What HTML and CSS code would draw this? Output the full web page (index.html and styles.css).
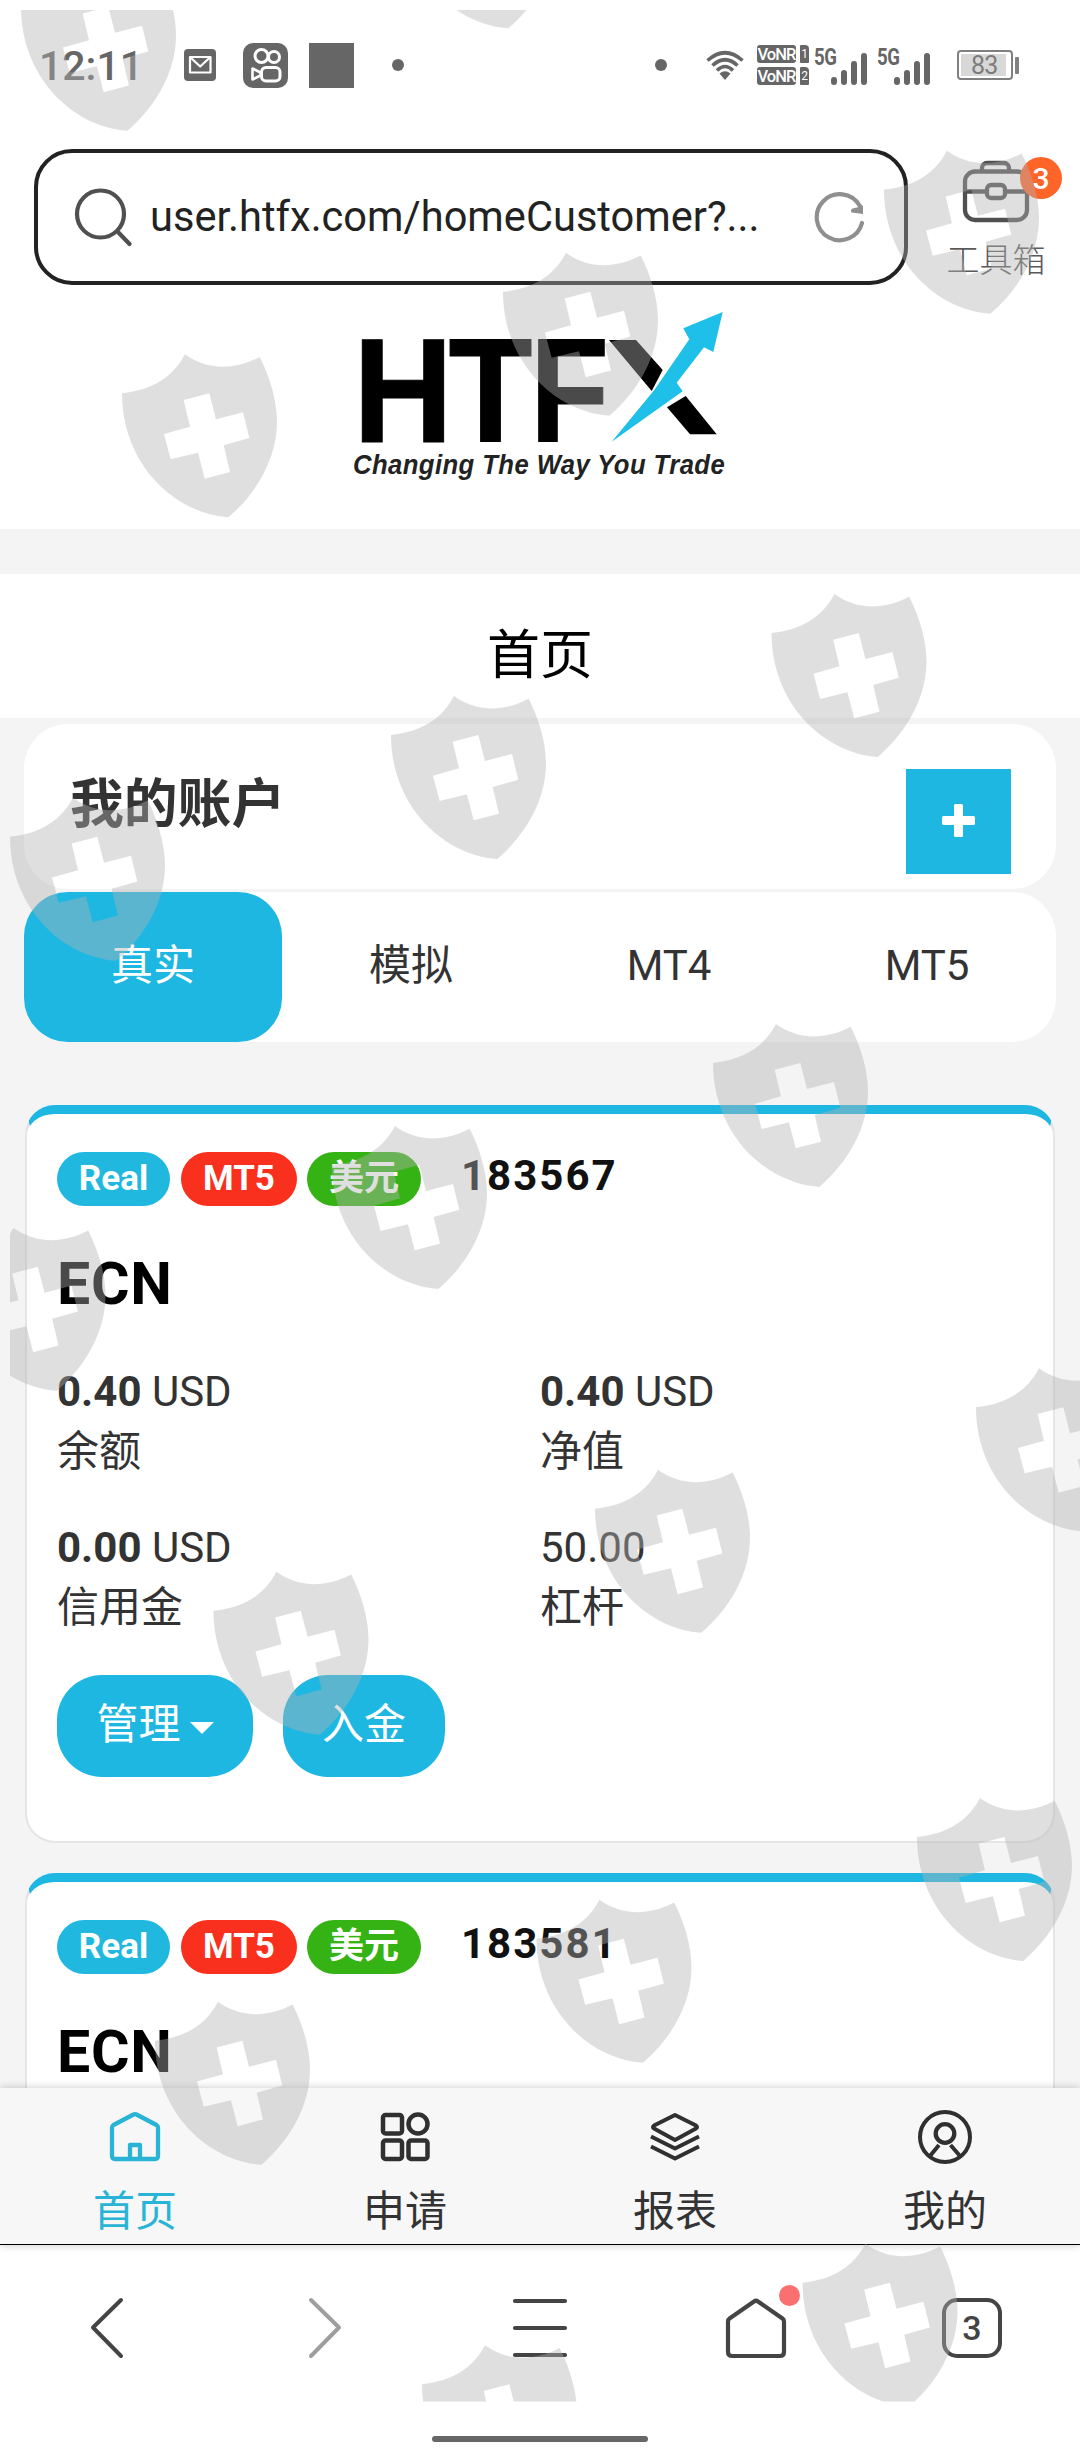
FILE: index.html
```html
<!DOCTYPE html>
<html lang="zh-CN">
<head>
<meta charset="utf-8">
<title>首页</title>
<link rel="stylesheet" href="styles.css">
</head>
<body>
<div class="phone">
  <header class="status">
    <span class="clock">12:11</span>
    <svg class="st-mail" width="32" height="32" viewBox="0 0 32 32"><rect width="32" height="32" rx="4" fill="#666"/><g fill="none" stroke="#fff" stroke-width="2.2" stroke-linejoin="round"><rect x="6" y="8" width="20.500" height="15.500"/><path d="M6.500 8.500l9.700 9 9.700-9"/></g></svg>
    <svg class="st-video" width="45" height="45" viewBox="0 0 45 45"><rect width="45" height="45" rx="10" fill="#666"/><g fill="none" stroke="#fff" stroke-width="3"><circle cx="18.500" cy="13" r="6.500"/><circle cx="31" cy="14" r="5.500"/><rect x="18.500" y="24.500" width="18.500" height="13.500" rx="4.500"/><path d="M17.500 29.500l-8-4v11l8-4z" stroke-linejoin="round" stroke-width="2.600"/></g></svg>
    <span class="st-square"></span>
    <span class="st-dot"></span>
    <span class="st-dot st-dot-right"></span>
    <svg class="st-wifi" width="38" height="31" viewBox="0 0 38 31"><g fill="none" stroke="#666" stroke-width="3.600"><path d="M1.500 10.500Q19-5 36.500 10.500"/><path d="M6.500 15.500Q19 4 31.500 15.500"/><path d="M11 20.500Q19 12.500 27 20.500"/></g><path d="M13.500 23.500Q19 19 24.500 23.500L19 30z" fill="#666"/></svg>
    <div class="vonr">
      <div class="vonr-row"><span class="vonr-tag">VoNR</span><span class="sim">1</span></div>
      <div class="vonr-row"><span class="vonr-tag">VoNR</span><span class="sim">2</span></div>
    </div>
    <div class="signal"><span class="gen">5G</span><svg width="36" height="33" viewBox="0 0 36 33"><path d="M3 28v2M13 21v9M23 12v18M33 4v26" stroke="#666" stroke-width="6" stroke-linecap="round"/></svg></div>
    <div class="signal"><span class="gen">5G</span><svg width="36" height="33" viewBox="0 0 36 33"><path d="M3 28v2M13 21v9M23 12v18M33 4v26" stroke="#666" stroke-width="6" stroke-linecap="round"/></svg></div>
    <div class="battery"><span class="level">83</span></div><span class="tip"></span>
  </header>

  <div class="address-row">
    <div class="address">
      <svg width="58" height="60" viewBox="0 0 58 60"><g fill="none" stroke="#505050" stroke-width="4.200" stroke-linecap="round"><circle cx="26.500" cy="27" r="23.500"/><path d="M44 45l11.500 12"/></g></svg>
      <span class="url">user.htfx.com/homeCustomer?...</span>
      <svg width="52" height="52" viewBox="0 0 52 52"><g fill="none" stroke="#8f8f8f" stroke-width="4.200" stroke-linecap="round"><path d="M48 32a23 23 0 1 1-2.500-17.500"/></g><path d="M37.500 21.500q-1.500-2.500 1-4L45 16l0-4 4 3v8z" fill="#8f8f8f"/></svg>
    </div>
    <div class="toolbox">
      <svg width="68" height="63" viewBox="0 0 68 63"><g fill="none" stroke="#505050" stroke-width="4.300"><rect x="3" y="11.500" width="62" height="48.500" rx="10"/><path d="M20 11V8a5 5 0 0 1 5-5h17a5 5 0 0 1 5 5v3M3 31.500h22M43 31.500h22"/><rect x="25" y="25" width="18" height="13" rx="4"/></g></svg>
      <span class="toolbox-label">工具箱</span>
      <span class="toolbox-count">3</span>
    </div>
  </div>

  <div class="brand">
    <svg width="380" height="180" viewBox="350 310 380 180" font-family="Liberation Sans, Arial, sans-serif">
      <g font-size="148" font-weight="700" stroke="#000"><text x="353" y="442" textLength="100" lengthAdjust="spacingAndGlyphs">H</text><text x="448.500" y="442" textLength="84" lengthAdjust="spacingAndGlyphs">T</text><text x="530" y="442" textLength="79" lengthAdjust="spacingAndGlyphs">F</text></g>
      <path d="M609 340h27l26.700 30-11 21zM667 407.300l18.700-11.300 31 38.300H690z"/>
      <path d="M611.700 441.700l42.600-51.700 35-50.700-6-11 39.400-16.300-9.400 40-9.300-4.700-27.300 35.400 6 8.600z" fill="#1ebfe8"/>
      <text transform="translate(353 473.500) scale(.9 1)" font-size="28.500" font-weight="700" font-style="italic" fill="#222" textLength="413" lengthAdjust="spacing">Changing The Way You Trade</text>
    </svg>
  </div>

  <h1 class="page-title">首页</h1>

  <main class="content">
    <section class="accounts-head"><h2>我的账户</h2><button class="add"><svg width="33" height="33" viewBox="0 0 33 33"><path d="M13.500 0h6a1.500 1.500 0 0 1 1.500 1.500V12h10.500a1.500 1.500 0 0 1 1.500 1.500v6a1.500 1.500 0 0 1-1.500 1.500H21v10.500a1.500 1.500 0 0 1-1.500 1.500h-6a1.500 1.500 0 0 1-1.500-1.500V21H1.500A1.500 1.500 0 0 1 0 19.500v-6A1.500 1.500 0 0 1 1.500 12H12V1.500A1.500 1.500 0 0 1 13.500 0z" fill="#fff"/></svg></button></section>
    <nav class="tabs"><a class="tab active">真实</a><a class="tab">模拟</a><a class="tab">MT4</a><a class="tab">MT5</a></nav>

    <article class="card">
      <div class="card-top"><span class="badge real">Real</span><span class="badge mt5">MT5</span><span class="badge usd">美元</span><span class="number">183567</span></div>
      <h3>ECN</h3>
      <div class="stats">
        <div class="stat"><div><b>0.40</b> USD</div><div>余额</div></div>
        <div class="stat"><div><b>0.40</b> USD</div><div>净值</div></div>
        <div class="stat"><div><b>0.00</b> USD</div><div>信用金</div></div>
        <div class="stat"><div>50.00</div><div>杠杆</div></div>
      </div>
      <div class="actions"><button class="btn manage">管理<span class="caret"></span></button><button class="btn deposit">入金</button></div>
    </article>

    <article class="card">
      <div class="card-top"><span class="badge real">Real</span><span class="badge mt5">MT5</span><span class="badge usd">美元</span><span class="number">183581</span></div>
      <h3>ECN</h3>
    </article>
  </main>

  <nav class="site-nav">
    <a class="current"><svg width="56" height="56" viewBox="0 0 56 56"><path d="M5 18.500Q5 17 6.500 16L26.500 5.500q1.500-.8 3 0L49.500 16q1.500 1 1.500 2.500V47q0 3-3 3H33V36H23V50H8q-3 0-3-3zM23 50h10" fill="none" stroke="#29b4d6" stroke-width="4.300" stroke-linejoin="round"/></svg><span>首页</span></a>
    <a><svg width="56" height="56" viewBox="0 0 56 56"><g fill="none" stroke="#303030" stroke-width="4.500"><rect x="6" y="6" width="19" height="18.500" rx="2.500"/><circle cx="41" cy="15" r="9.500"/><rect x="6" y="31.500" width="19" height="18.500" rx="2.500"/><rect x="31.500" y="31.500" width="19" height="18.500" rx="2.500"/></g></svg><span>申请</span></a>
    <a><svg width="56" height="56" viewBox="0 0 56 56"><g fill="none" stroke="#303030" stroke-width="4" stroke-linejoin="round"><path d="M28 6l21 10.500q2 1.500 0 3L28 31 7 19.500q-2-1.500 0-3z"/><path d="M4 27.500L28 39.500l24-12M4 37.500L28 49.500l24-12"/></g></svg><span>报表</span></a>
    <a><svg width="56" height="56" viewBox="0 0 56 56"><g fill="none" stroke="#303030" stroke-width="4"><circle cx="28" cy="28" r="25"/><circle cx="28" cy="24.500" r="9.300" stroke-width="4.300"/><path d="M22 36L13 47M33.500 36L43 47"/></g></svg><span>我的</span></a>
  </nav>

  <footer class="browser-bar">
    <a><svg width="68" height="68" viewBox="0 0 68 68"><path d="M47 6L19 33.500 47 62" fill="none" stroke="#444" stroke-width="4" stroke-linecap="round" stroke-linejoin="round"/></svg></a>
    <a><svg width="68" height="68" viewBox="0 0 68 68"><path d="M21 6l28 27.500L21 62" fill="none" stroke="#9e9e9e" stroke-width="4" stroke-linecap="round" stroke-linejoin="round"/></svg></a>
    <a><svg width="68" height="68" viewBox="0 0 68 68"><path d="M9 7h50M9 34h50M9 61h50" stroke="#444" stroke-width="4.200" stroke-linecap="round"/></svg></a>
    <a><svg width="68" height="68" viewBox="0 0 68 68"><path d="M6 27.500q0-2 1.500-3L32 7.500q2-1.500 4 0l24.500 17q1.500 1 1.500 3V58q0 4-4 4H10q-4 0-4-4z" fill="none" stroke="#444" stroke-width="4.200"/></svg><i class="notice"></i></a>
    <a><span class="tab-count">3</span></a>
  </footer>
  <div class="gesture"><span></span></div>

  <svg class="shields" width="1080" height="2460" viewBox="0 0 1080 2460" aria-hidden="true">
    <defs>
      <clipPath id="area"><rect x="10" y="10" width="1070" height="2391.500"/></clipPath>
      <path id="shield" fill-rule="evenodd" transform="translate(0 340) scale(.33333)" d="M366 160C460 150 520 110 555 43C620 90 700 92 779 51C808 108 831 180 831 245C831 350 775 455 685 532C520 520 366 370 366 160zM551 180L570 260L492 282L512 358L594 338L614 416L690 396L671 316L748 294L729 217L648 238L628 160z"/>
    </defs>
    <g clip-path="url(#area)" fill="#b2b2b2" fill-opacity=".416">
      <use href="#shield" x="-101" y="-386.500"/><use href="#shield" x="280" y="-489"/>
      <use href="#shield" x="762" y="-203.500"/><use href="#shield" x="381" y="-101.500"/><use href="#shield"/>
      <use href="#shield" x="649.500" y="239.700"/><use href="#shield" x="269" y="341.700"/><use href="#shield" x="-112" y="443.500"/>
      <use href="#shield" x="591" y="669.700"/><use href="#shield" x="210" y="771.700"/><use href="#shield" x="-171.500" y="873.500"/>
      <use href="#shield" x="854" y="1014"/><use href="#shield" x="473" y="1115.500"/><use href="#shield" x="91.500" y="1217.500"/>
      <use href="#shield" x="795" y="1443.700"/><use href="#shield" x="414.500" y="1545.500"/><use href="#shield" x="33" y="1647.500"/>
      <use href="#shield" x="680.500" y="1889.500"/><use href="#shield" x="300" y="1991"/>
    </g>
  </svg>
</div>
</body>
</html>
```

FILE: styles.css
```css
* { box-sizing: border-box; }
body { margin: 0; background: #fff; font-family: Roboto, "Noto Sans CJK SC", sans-serif; color: #333; }
h1, h2, h3 { margin: 0; }
svg { display: block; flex: none; }
button { border: 0; padding: 0; font: inherit; color: #fff; background: #1eb7e2; }
.phone { position: relative; width: 1080px; height: 2460px; overflow: hidden; display: flex; flex-direction: column; }

/* system status */
.status { height: 130px; flex: none; display: flex; align-items: center; padding-left: 39px; color: #666; }
.clock { width: 145px; font-size: 41px; font-weight: 500; line-height: 48px; padding-top: 1px; }
.st-video { margin-left: 27px; }
.st-square { width: 45px; height: 45px; margin-left: 21px; background: #666; }
.st-dot { width: 12px; height: 12px; margin-left: 38px; border-radius: 50%; background: #666; }
.st-dot-right { margin-left: 251px; }
.st-wifi { margin-left: 39px; }
.vonr { margin-left: 13px; display: flex; flex-direction: column; gap: 4px; }
.vonr-row { display: flex; gap: 4px; }
.vonr-tag { width: 39px; height: 18px; border-radius: 3px; background: #666; color: #fff; font: 500 16.5px/20px Roboto, sans-serif; letter-spacing: -.9px; text-align: center; }
.sim { width: 9px; height: 18px; border-radius: 1px 4px 1px 1px; background: #666; color: #fff; font: 12px/18px Roboto, sans-serif; text-align: center; }
.signal { display: flex; align-items: flex-start; height: 39px; width: 53px; margin-left: 5px; }
.signal + .signal { margin-left: 10px; }
.gen { width: 17px; flex: none; font: 700 24.5px/21px Roboto, sans-serif; white-space: nowrap; letter-spacing: -.5px; transform: scaleX(.76); transform-origin: 0 0; }
.signal svg { margin-top: 6px; }
.battery { width: 56px; height: 30px; margin-left: 27px; flex: none; border: 2px solid #808080; border-radius: 4px; padding: 2px; }
.level { display: block; width: 45px; height: 22px; padding-left: 10px; background: #d8d8d8; font-size: 25px; line-height: 23px; letter-spacing: -.8px; color: #7c7c7c; }
.tip { width: 4px; height: 17px; margin-left: 2px; border-radius: 1px; background: #808080; }

/* browser address row */
.address-row { height: 155px; flex: none; display: flex; padding: 19px 0 0 34px; }
.address { width: 874px; height: 136px; border: 4px solid #222; border-radius: 38px; display: flex; align-items: center; padding: 0 38px 0 36px; }
.url { width: 662px; margin-left: 18px; font-size: 41.6px; line-height: 50px; color: #222; margin-top: -1px; white-space: nowrap; }
.address svg:last-child { margin-left: 2px; }
.toolbox { position: relative; width: 172px; display: flex; flex-direction: column; align-items: center; padding: 11px 0 0 4px; }
.toolbox-label { margin-top: 15px; font-size: 33px; line-height: 46px; color: #5a5a5a; font-weight: 300; }
.toolbox-count { position: absolute; left: 112px; top: 8px; width: 42px; height: 42px; border-radius: 50%; background: #ff6428; color: #fff; font-size: 30px; font-weight: 500; line-height: 43px; text-align: center; }

/* site header */
.brand { height: 244px; flex: none; padding: 25px 0 0 350px; }
.page-title { height: 189px; flex: none; border-top: 45px solid #f4f4f4; font-size: 53px; font-weight: 400; line-height: 165px; color: #000; text-align: center; }
.content { height: 1370px; flex: none; overflow: hidden; padding: 6px 24px 0; background: #f4f4f4; }
.accounts-head { height: 165px; border-radius: 44px; background: #fff; display: flex; justify-content: space-between; padding: 45px 45px 0 46px; }
.accounts-head h2 { font-size: 53.8px; line-height: 71px; font-weight: 700; }
.add { width: 105px; height: 105px; display: flex; align-items: center; justify-content: center; padding-bottom: 3px; }
.tabs { height: 150px; margin: 3px 0 63px; border-radius: 44px; background: #fff; display: flex; }
.tab { flex: 1; border-radius: 44px; text-align: center; font-size: 42px; line-height: 147px; }
.tab.active { background: #1eb7e2; color: #fff; }

/* account cards */
.card { height: 738px; margin: 0 1px 30px; border: 2px solid #e5e5e5; border-top: 9px solid #1eb7e2; border-radius: 30px; background: #fff; padding: 38px 30px 0; }
.card-top { height: 54px; display: flex; }
.badge { height: 54px; border-radius: 27px; color: #fff; font-size: 35px; font-weight: 700; line-height: 54px; text-align: center; }
.real { width: 113px; background: #20b8de; }
.mt5 { width: 116px; margin-left: 11px; background: #f9301d; }
.usd { width: 114px; margin-left: 10px; background: #36b314; }
.number { margin-left: 40px; font-size: 42px; font-weight: 700; line-height: 48px; letter-spacing: 2px; color: #111; }
.card h3 { margin-top: 43px; font-size: 59px; line-height: 70px; letter-spacing: .7px; color: #000; }
.stats { margin-top: 43px; display: grid; grid-template-columns: 483px 1fr; grid-auto-rows: 156px; font-size: 42px; line-height: 60px; }
.actions { display: flex; gap: 30px; margin-top: 1px; }
.btn { height: 102px; border-radius: 45px; font-size: 42px; line-height: 99px; display: flex; justify-content: center; }
.manage { width: 196px; }
.deposit { width: 162px; }
.caret { margin: 47px 0 0 9px; width: 24px; height: 12px; border: 12px solid transparent; border-top-color: #fff; border-bottom: 0; }

/* site tab bar */
.site-nav { position: relative; height: 157px; flex: none; display: flex; background: #f7f7f8; border-bottom: 1px solid #000; box-shadow: 0 0 8px rgba(0,0,0,.22); }
.site-nav a { flex: 1; display: flex; flex-direction: column; align-items: center; padding-top: 21px; font-size: 42px; line-height: 60px; color: #333; }
.site-nav span { margin-top: 17px; }
.site-nav .current { color: #29b4d6; }

/* browser bar */
.browser-bar { height: 167px; flex: none; display: flex; background: #fff; }
.browser-bar a { position: relative; flex: 1; display: flex; justify-content: center; padding-top: 49px; }
.notice { position: absolute; left: 131px; top: 40px; width: 21px; height: 21px; border-radius: 50%; background: #fa7070; }
.tab-count { width: 60px; height: 60px; margin-top: 4px; border: 4px solid #444; border-radius: 15px; text-align: center; font-size: 34px; font-weight: 500; line-height: 52px; color: #444; }
.gesture { flex: 1; display: flex; justify-content: center; padding-top: 24px; }
.gesture span { width: 216px; height: 6px; border-radius: 3px; background: #666; }

.shields { position: absolute; left: 0; top: 0; z-index: 2; pointer-events: none; }
```
